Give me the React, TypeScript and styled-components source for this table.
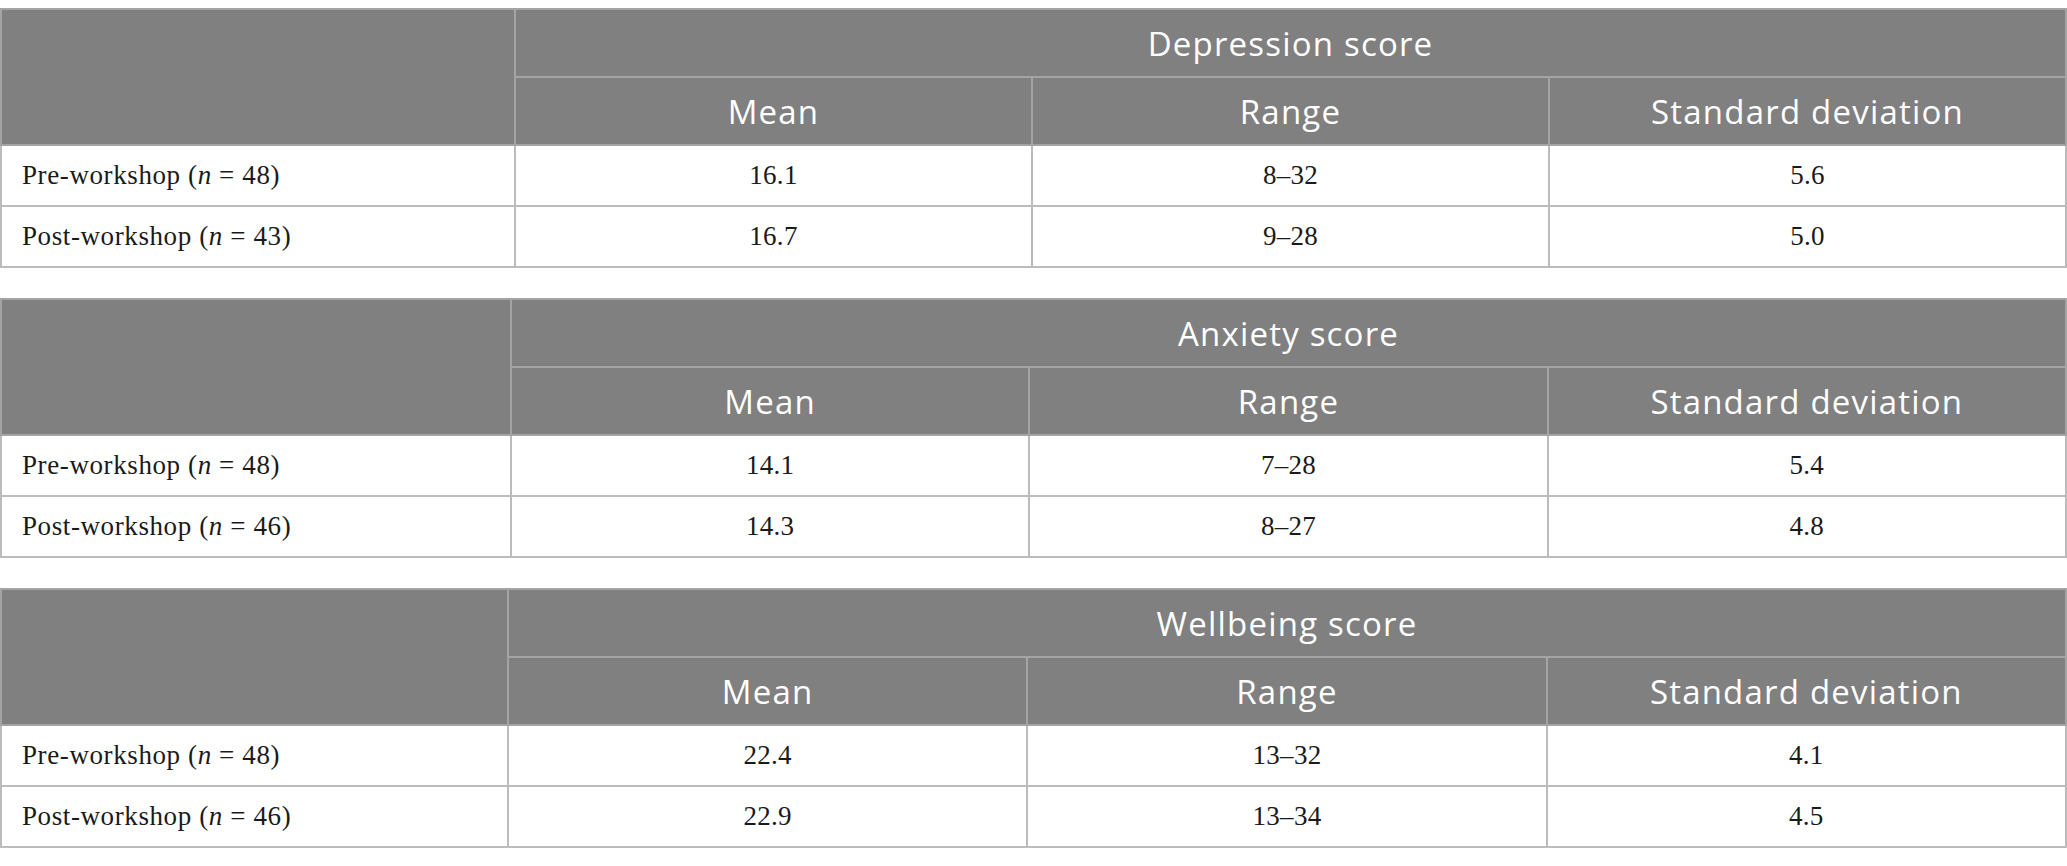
import * as React from "react"
import styled, { createGlobalStyle } from "styled-components"

const GlobalStyle = createGlobalStyle`
  html, body {
    margin: 0;
    padding: 0;
    background: #ffffff;
  }
`

const Page = styled.main`
  display: flex;
  flex-direction: column;
  gap: 30px;
  padding-top: 8px;
  width: 2067px;
`

const Table = styled.table`
  width: 100%;
  border-collapse: collapse;
  table-layout: fixed;
  border: 2px solid #bcbcbc;
`

const HeadCell = styled.th`
  background: #808080;
  color: #ffffff;
  font-family: "Open Sans", "Noto Sans", sans-serif;
  font-weight: 400;
  font-size: 33px;
  letter-spacing: 1.2px;
  text-align: center;
  height: 66px;
  padding: 0;
  border: 2px solid #a4a4a4;
`

const BodyCell = styled.td<{ $label?: boolean }>`
  font-family: "Liberation Serif", "Times New Roman", serif;
  font-size: 27px;
  letter-spacing: ${({ $label }) => ($label ? "0.6px" : "0.3px")};
  color: #1a1a1a;
  text-align: ${({ $label }) => ($label ? "left" : "center")};
  padding: 0 0 0 ${({ $label }) => ($label ? "20px" : "0")};
  height: 59px;
  border: 2px solid #bcbcbc;
`

type Row = {
  label: string
  n: number
  mean: string
  range: string
  sd: string
}

type Block = {
  title: string
  labelWidth: number
  rows: Row[]
}

const blocks: Block[] = [
  {
    title: "Depression score",
    labelWidth: 514,
    rows: [
      { label: "Pre-workshop", n: 48, mean: "16.1", range: "8–32", sd: "5.6" },
      { label: "Post-workshop", n: 43, mean: "16.7", range: "9–28", sd: "5.0" },
    ],
  },
  {
    title: "Anxiety score",
    labelWidth: 510,
    rows: [
      { label: "Pre-workshop", n: 48, mean: "14.1", range: "7–28", sd: "5.4" },
      { label: "Post-workshop", n: 46, mean: "14.3", range: "8–27", sd: "4.8" },
    ],
  },
  {
    title: "Wellbeing score",
    labelWidth: 507,
    rows: [
      { label: "Pre-workshop", n: 48, mean: "22.4", range: "13–32", sd: "4.1" },
      { label: "Post-workshop", n: 46, mean: "22.9", range: "13–34", sd: "4.5" },
    ],
  },
]

const ScoreTable = ({ title, labelWidth, rows }: Block) => (
  <Table>
    <colgroup>
      <col style={{ width: labelWidth }} />
      <col />
      <col />
      <col />
    </colgroup>
    <thead>
      <tr>
        <HeadCell rowSpan={2} />
        <HeadCell colSpan={3}>{title}</HeadCell>
      </tr>
      <tr>
        <HeadCell>Mean</HeadCell>
        <HeadCell>Range</HeadCell>
        <HeadCell>Standard deviation</HeadCell>
      </tr>
    </thead>
    <tbody>
      {rows.map((r) => (
        <tr key={r.label}>
          <BodyCell $label>
            {r.label} (<i>n</i> = {r.n})
          </BodyCell>
          <BodyCell>{r.mean}</BodyCell>
          <BodyCell>{r.range}</BodyCell>
          <BodyCell>{r.sd}</BodyCell>
        </tr>
      ))}
    </tbody>
  </Table>
)

export default function App() {
  return (
    <>
      <GlobalStyle />
      <Page>
        {blocks.map((b) => (
          <ScoreTable key={b.title} {...b} />
        ))}
      </Page>
    </>
  )
}
